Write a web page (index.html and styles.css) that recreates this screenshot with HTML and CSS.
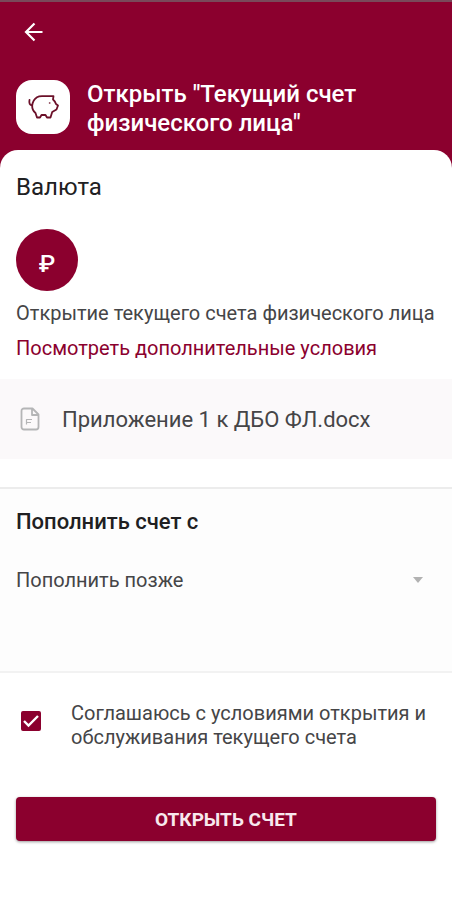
FILE: index.html
```html
<!DOCTYPE html>
<html lang="ru">
<head>
  <meta charset="utf-8">
  <meta name="viewport" content="width=device-width, initial-scale=1">
  <title>Открыть текущий счет</title>
  <link rel="stylesheet" href="styles.css">
</head>
<body>
  <header class="header">
    <button class="back" type="button" aria-label="Назад">
      <svg width="20" height="20" viewBox="0 0 20 20" fill="none" stroke="currentColor" stroke-width="2.2"><path d="M18.5 10H2.5M10.5 1.5 2 10l8.500 8.500"/></svg>
    </button>
    <div class="product">
      <span class="product-icon">
        <svg width="54" height="54" viewBox="0 0 54 54" fill="none" stroke="currentColor" stroke-width="1.800" stroke-linejoin="round" stroke-linecap="round"><path d="M13.500 20c-.6 3 .2 5 2.500 5.500M16.200 25.500c.3-3.500 2-6.500 4.800-8.300 1.500-.8 3-1 5-1h11.500l-.5 3.300c1.500 1.200 2.300 2.500 3 4.500l2 1.500-1.500 4-4.300 2.500-1.700 5.500h-3.500l-1.500-2.500h-4l-1.500 2.500h-3l-1.500-4.500c-2.300-2-3.500-4.500-3.300-7.500z"/><circle cx="33.500" cy="23" r=".5" stroke-width=".6"/></svg>
      </span>
      <h1 class="title">Открыть "Текущий счет физического лица"</h1>
    </div>
  </header>
  <main class="sheet">
    <section class="currency">
      <h2 class="heading heading-light">Валюта</h2>
      <button class="coin" type="button" aria-label="Рубль">₽</button>
      <p class="text">Открытие текущего счета физического лица</p>
      <a class="text terms" href="#terms">Посмотреть дополнительные условия</a>
    </section>
    <a class="document" href="#document">
      <svg width="20" height="24" viewBox="0 0 20 24" fill="none" stroke="currentColor" stroke-width="1.800" stroke-linejoin="round"><path d="M4 1.500h8.500l6 6V20a2.500 2.500 0 0 1-2.500 2.500H4A2.500 2.500 0 0 1 1.500 20V4A2.500 2.500 0 0 1 4 1.500zM12 2v6h6"/><path d="M6.500 17.500v-5H12M6.500 15.500H11" stroke-width="1.200"/></svg>
      <span>Приложение 1 к ДБО ФЛ.docx</span>
    </a>
    <section class="funding">
      <h2 class="heading"><label for="source">Пополнить счет с</label></h2>
      <div class="select-wrap">
        <select class="text select" id="source">
          <option>Пополнить позже</option>
        </select>
        <svg class="caret" width="10" height="6" viewBox="0 0 10 6"><path d="M0 0h10L5 6z" fill="currentColor"/></svg>
      </div>
    </section>
    <section class="confirm">
      <div class="agree">
        <span class="check">
          <input class="check-input" id="agree" type="checkbox" checked>
          <svg class="check-mark" width="20" height="20" viewBox="0 0 20 20" fill="none" stroke="currentColor" stroke-width="2.400"><path d="m3 10 4.500 4.500L17 5"/></svg>
        </span>
        <label class="text" for="agree">Соглашаюсь с условиями открытия и обслуживания текущего счета</label>
      </div>
      <button class="submit" type="button">ОТКРЫТЬ СЧЕТ</button>
    </section>
  </main>
</body>
</html>
```
FILE: styles.css
```css
:root {
  --brand: #8b002e;
  --ink: #202022;
  --body-ink: #454547;
}

* {
  box-sizing: border-box;
}

body {
  margin: 0;
  min-height: 100vh;
  display: flex;
  flex-direction: column;
  background: var(--brand);
  color: var(--ink);
  font-family: Roboto, "Liberation Sans", sans-serif;
}

h1,
h2,
p {
  margin: 0;
}

button {
  border: 0;
  font-family: inherit;
  cursor: pointer;
}

a {
  text-decoration: none;
}

.header {
  border-top: 2px solid #79495a;
  padding: 12px 16px;
  color: #fff;
}

.back {
  display: grid;
  place-items: center;
  width: 36px;
  height: 36px;
  padding: 0;
  background: none;
  color: #fff;
}

.product {
  display: flex;
  align-items: flex-start;
  gap: 17px;
  margin-top: 30px;
}

.product-icon {
  flex: none;
  display: grid;
  width: 54px;
  height: 54px;
  border-radius: 16px;
  background: #fff;
  color: #6b1029;
}

.title {
  max-width: 300px;
  font-size: 24px;
  line-height: 29px;
  font-weight: 500;
}

.sheet {
  flex: 1;
  border-radius: 18px 18px 0 0;
  background: #fff;
}

.currency {
  display: flex;
  flex-direction: column;
  align-items: flex-start;
  padding: 21px 16px 19px;
}

.heading {
  font-size: 22px;
  line-height: 32px;
  font-weight: 500;
}

.heading-light {
  font-size: 24px;
  font-weight: 400;
}

.coin {
  width: 62px;
  height: 62px;
  margin: 26px 0 10px;
  padding: 8px 0 0;
  border-radius: 50%;
  background: var(--brand);
  color: #fff;
  font-size: 24px;
  font-weight: 500;
}

.text {
  font-size: 20px;
  line-height: 24px;
  color: var(--body-ink);
}

.terms {
  margin-top: 11px;
  color: var(--brand);
}

.document {
  display: flex;
  align-items: center;
  gap: 22px;
  min-height: 80px;
  padding: 0 20px;
  background: #fbf9fa;
  color: var(--body-ink);
  font-size: 22px;
}

.document svg {
  flex: none;
  color: #b4b5b6;
}

.funding {
  margin-top: 28px;
  padding: 17px 16px 75px;
  border-top: 2px solid #ececec;
  border-bottom: 2px solid #f2f2f2;
  background: #fdfdfd;
}

.select-wrap {
  display: grid;
  align-items: center;
  margin-top: 26px;
}

.select-wrap > * {
  grid-area: 1 / 1;
}

.select {
  width: 100%;
  height: 32px;
  padding: 0;
  border: 0;
  appearance: none;
  background: none;
  font-family: inherit;
}

.caret {
  justify-self: end;
  margin-right: 13px;
  color: #b2b2b2;
  pointer-events: none;
}

.confirm {
  padding: 28px 16px;
}

.agree {
  display: flex;
  align-items: flex-start;
  gap: 30px;
  padding-left: 5px;
}

.check {
  flex: none;
  display: grid;
  margin-top: 10px;
}

.check > * {
  grid-area: 1 / 1;
}

.check-input {
  width: 20px;
  height: 20px;
  margin: 0;
  appearance: none;
  border: 2px solid var(--brand);
  border-radius: 2px;
}

.check-input:checked {
  background: var(--brand);
}

.check-mark {
  color: #fff;
  pointer-events: none;
}

.submit {
  width: 100%;
  height: 44px;
  margin-top: 48px;
  border-radius: 4px;
  background: var(--brand);
  box-shadow: 0 1px 3px rgba(0, 0, 0, 0.4);
  color: #f8e8ed;
  font-size: 19px;
  font-weight: 700;
}
```
